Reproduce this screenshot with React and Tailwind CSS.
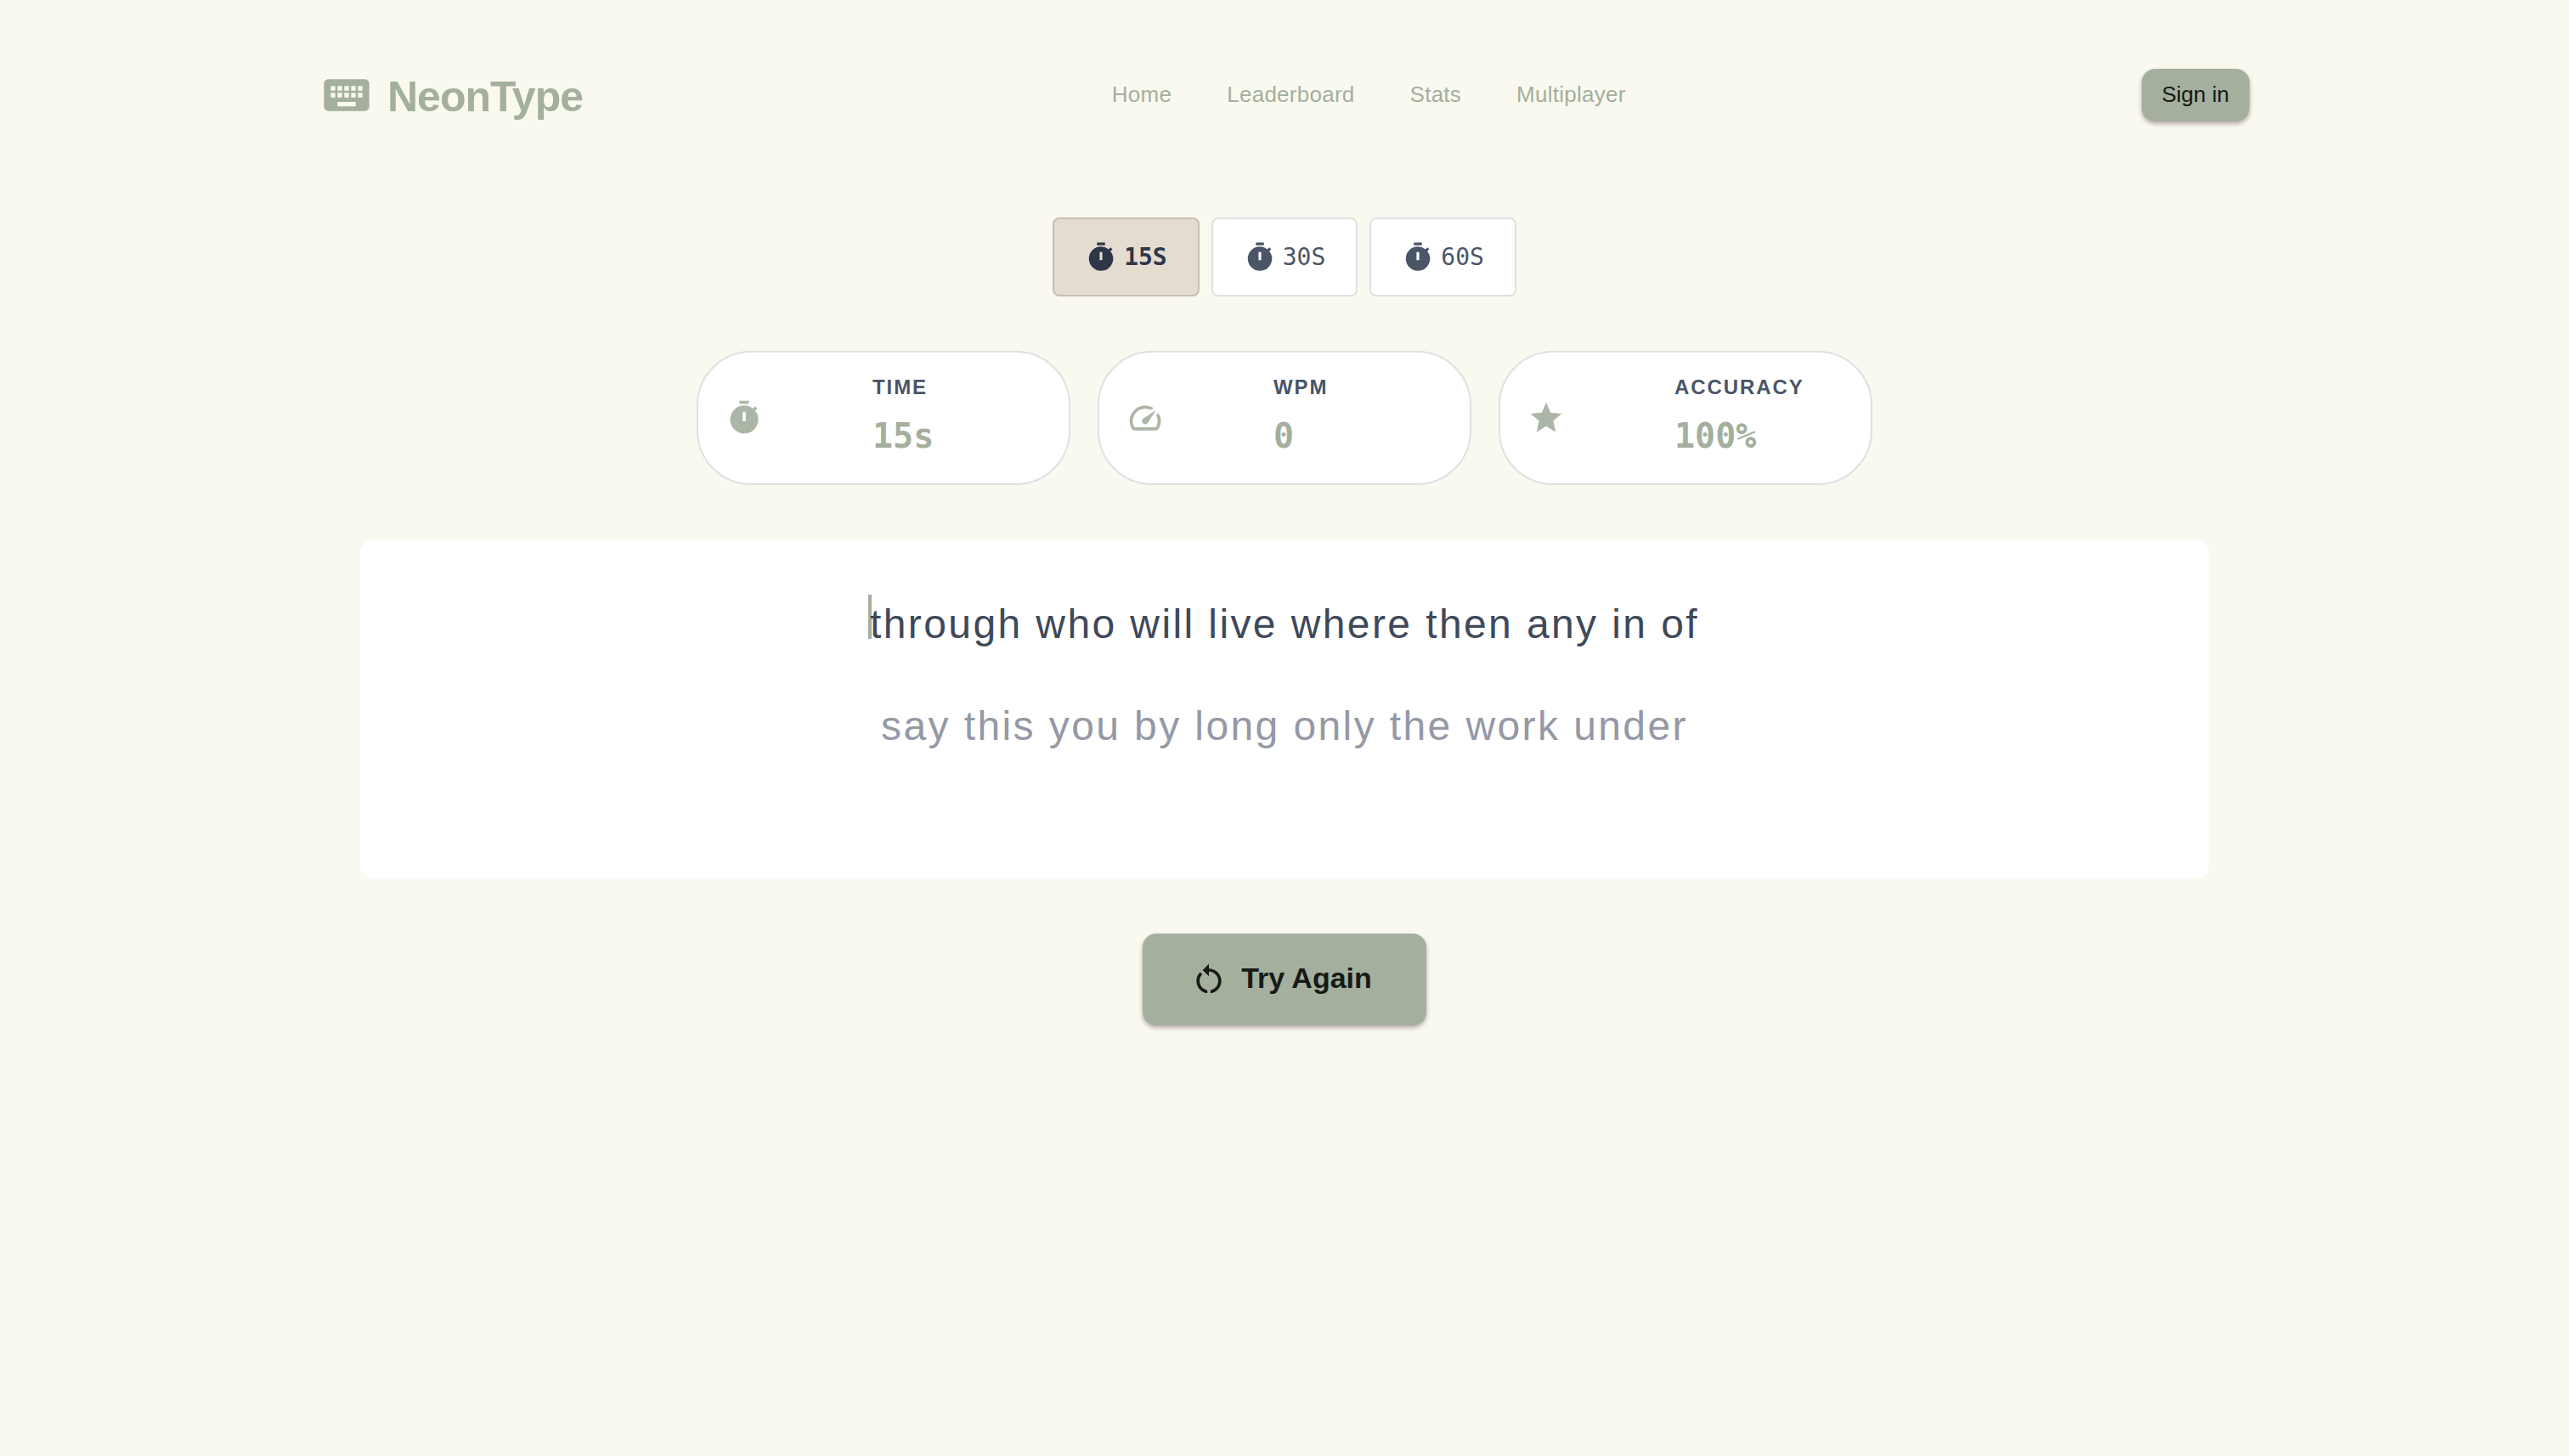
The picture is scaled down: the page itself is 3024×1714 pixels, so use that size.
import { MdKeyboard, MdTimer, MdSpeed, MdStar, MdRestartAlt } from "react-icons/md";

const links = ["Home", "Leaderboard", "Stats", "Multiplayer"];

const modes = [
  { label: "15S", active: true },
  { label: "30S", active: false },
  { label: "60S", active: false },
];

const stats = [
  { label: "TIME", value: "15s", Icon: MdTimer },
  { label: "WPM", value: "0", Icon: MdSpeed },
  { label: "ACCURACY", value: "100%", Icon: MdStar },
];

function Header() {
  return (
    <header className="mx-auto flex w-full max-w-[2400px] items-center justify-between px-16 pt-20 text-[#a4af9d]">
      <a href="#home" className="flex items-center gap-4">
        <MdKeyboard className="size-16" />
        <span className="pt-1 text-[50px] leading-15 font-bold tracking-[-0.02em]">NeonType</span>
      </a>
      <nav className="flex gap-[65px] pb-0.5 pl-4 text-[26px] leading-8 tracking-[0.01em]">
        {links.map((link) => (
          <a key={link} href={`#${link.toLowerCase()}`}>
            {link}
          </a>
        ))}
      </nav>
      <button
        type="button"
        className="rounded-2xl bg-[#a4af9d] px-6 pt-3.5 pb-4 text-[26px] leading-8 text-[#161a16] shadow-[0_3px_5px_rgba(60,30,40,0.35)]"
      >
        Sign in
      </button>
    </header>
  );
}

function ModeButton({ label, active }) {
  return (
    <button
      type="button"
      aria-pressed={active}
      className={`flex items-center gap-2 rounded-lg border-2 px-9 py-6 font-['DejaVu_Sans_Mono',monospace] text-[28px] leading-[41px] ${
        active
          ? "border-[#c8beb0] bg-[#e4dcd0] font-bold text-[#2d3748]"
          : "border-[#e0e0e0] bg-white text-[#4a5568]"
      }`}
    >
      <MdTimer className="size-[38px]" />
      {label}
    </button>
  );
}

function StatCard({ label, value, Icon }) {
  return (
    <div className="flex items-center rounded-[64px] border-2 border-[#e0e0e0] bg-white px-8 py-6">
      <div className="w-[173px]">
        <Icon className="size-11 text-[#a4af9d] opacity-90" />
      </div>
      <div>
        <div className="text-[24px] leading-[34px] font-bold tracking-[0.08em] text-[#4a5568]">{label}</div>
        <div className="mt-2 font-['DejaVu_Sans_Mono',monospace] text-[40px] leading-16 font-bold text-[#a4af9d]">
          {value}
        </div>
      </div>
    </div>
  );
}

export default function App() {
  return (
    <div className="min-h-screen bg-[#f9f9ef] font-['Liberation_Sans',Arial,sans-serif]">
      <Header />
      <main className="flex flex-col items-center px-16 pt-28">
        <div className="flex gap-[14px]">
          {modes.map((mode) => (
            <ModeButton key={mode.label} {...mode} />
          ))}
        </div>
        <section className="mt-16 grid w-full max-w-[1384px] grid-cols-3 gap-8">
          {stats.map((stat) => (
            <StatCard key={stat.label} {...stat} />
          ))}
        </section>
        <section className="mt-16 min-h-[400px] w-full max-w-[2176px] rounded-2xl bg-white p-16 text-center text-[48px] leading-[72px] tracking-[0.05em]">
          <p className="text-[#3f4959]">
            <span className="relative">
              <span className="absolute -top-2 -left-0.5 h-[52px] w-1 bg-[#a4af9d]" />
              <span className="relative">through</span>
            </span>{" "}
            who will live where then any in of
          </p>
          <p className="mt-12 text-[#9499a5]">say this you by long only the work under</p>
        </section>
        <button
          type="button"
          className="mt-16 flex items-center gap-4 rounded-2xl bg-[#a4af9d] px-16 py-8 text-[34px] leading-10 font-bold text-[#161a16] shadow-[0_3px_5px_rgba(60,30,40,0.35)]"
        >
          <MdRestartAlt className="-ml-2 size-11" />
          <span className="pb-1">Try Again</span>
        </button>
      </main>
    </div>
  );
}
